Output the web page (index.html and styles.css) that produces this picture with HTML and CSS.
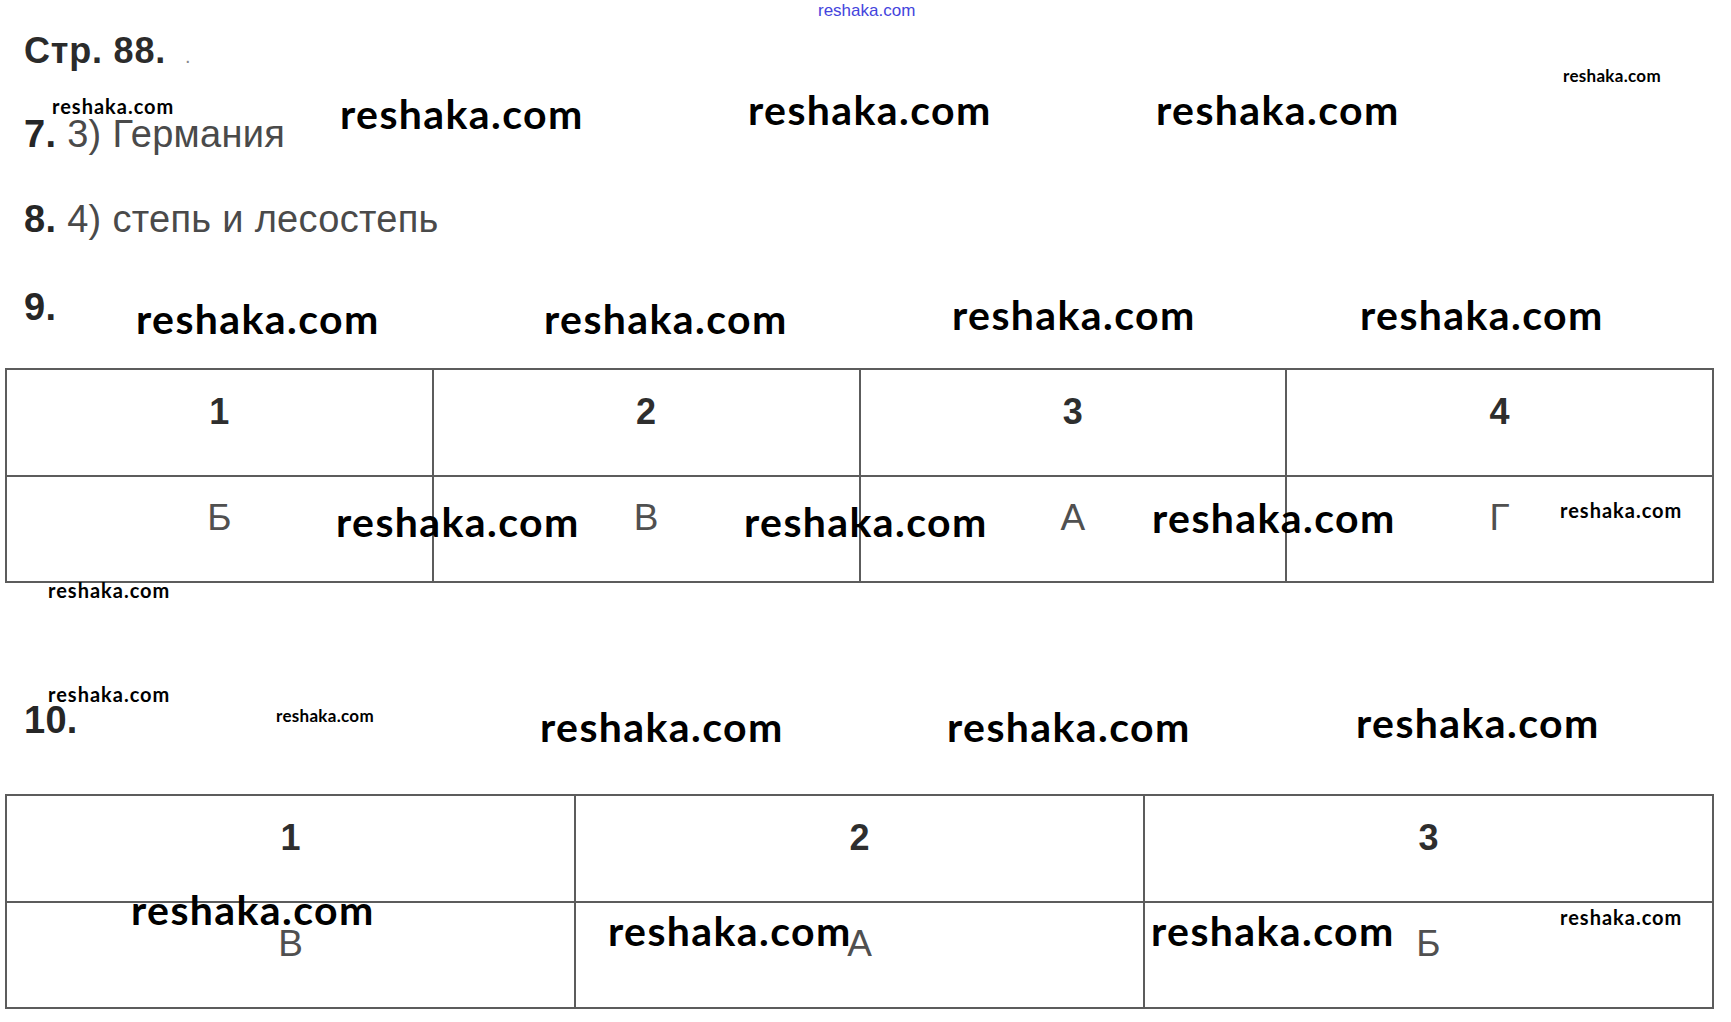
FILE: index.html
```html
<!DOCTYPE html>
<html lang="ru">
<head>
<meta charset="utf-8">
<title>Стр. 88</title>
<link rel="stylesheet" href="styles.css">
</head>
<body>
<div class="page">
  <div class="line title"><span class="strong">Стр. 88.</span> <span class="dot">.</span></div>
  <div class="line q7"><span class="num">7.</span> <span class="ans">3) Германия</span></div>
  <div class="line q8"><span class="num">8.</span> <span class="ans">4) степь и лесостепь</span></div>
  <div class="line q9"><span class="num">9.</span></div>

  <div class="grid grid4 t1">
    <div class="cell head">1</div>
    <div class="cell head">2</div>
    <div class="cell head">3</div>
    <div class="cell head">4</div>
    <div class="cell val">Б</div>
    <div class="cell val">В</div>
    <div class="cell val">А</div>
    <div class="cell val">Г</div>
  </div>

  <div class="line q10"><span class="num">10.</span></div>

  <div class="grid grid3 t2">
    <div class="cell head">1</div>
    <div class="cell head">2</div>
    <div class="cell head">3</div>
    <div class="cell val">В</div>
    <div class="cell val">А</div>
    <div class="cell val">Б</div>
  </div>

  <span class="wm-top">reshaka.com</span>

  <span class="wm lg w1">reshaka.com</span>
  <span class="wm lg w2">reshaka.com</span>
  <span class="wm lg w3">reshaka.com</span>
  <span class="wm xs w4">reshaka.com</span>
  <span class="wm sm w5">reshaka.com</span>
  <span class="wm lg w6">reshaka.com</span>
  <span class="wm lg w7">reshaka.com</span>
  <span class="wm lg w8">reshaka.com</span>
  <span class="wm lg w9">reshaka.com</span>
  <span class="wm lg w10">reshaka.com</span>
  <span class="wm lg w11">reshaka.com</span>
  <span class="wm lg w12">reshaka.com</span>
  <span class="wm sm w13">reshaka.com</span>
  <span class="wm sm w14">reshaka.com</span>
  <span class="wm sm w15">reshaka.com</span>
  <span class="wm xs w16">reshaka.com</span>
  <span class="wm lg w17">reshaka.com</span>
  <span class="wm lg w18">reshaka.com</span>
  <span class="wm lg w19">reshaka.com</span>
  <span class="wm lg w20">reshaka.com</span>
  <span class="wm lg w21">reshaka.com</span>
  <span class="wm lg w22">reshaka.com</span>
  <span class="wm sm w23">reshaka.com</span>
</div>
</body>
</html>
```

FILE: styles.css
```css
html, body {
  margin: 0;
  padding: 0;
  background: #ffffff;
}

.page {
  position: relative;
  width: 1731px;
  height: 1022px;
  overflow: hidden;
  padding-top: 33px;
  box-sizing: border-box;
  font-family: "Liberation Sans", Arial, sans-serif;
  color: #2a2a2a;
}

.line {
  margin-left: 24px;
  font-size: 38px;
  line-height: 38px;
  letter-spacing: 0.3px;
  white-space: nowrap;
}

.title {
  font-size: 36px;
  line-height: 36px;
  letter-spacing: 0.8px;
}

.strong {
  font-weight: 700;
  color: #2b2b2b;
}

.dot {
  font-size: 20px;
  line-height: 0;
  color: #8a8a8a;
  margin-left: 8px;
}

.num {
  font-weight: 700;
  color: #262626;
}

.ans {
  color: #4a4a4a;
}

.q7 { margin-top: 46px; }
.q8 { margin-top: 47px; }
.q9 { margin-top: 50px; }
.q10 { margin-top: 118px; }

.grid {
  display: grid;
  margin-left: 5px;
  width: 1709px;
  height: 215px;
  box-sizing: border-box;
  padding: 2px;
  gap: 2px;
  background: #5c5c5c;
  grid-template-rows: 1fr 1fr;
}

.grid4 { grid-template-columns: repeat(4, 1fr); }
.grid3 { grid-template-columns: repeat(3, 1fr); }

.t1 { margin-top: 42px; }
.t2 { margin-top: 55px; }

.cell {
  background: #ffffff;
  text-align: center;
  font-size: 36px;
  line-height: 36px;
}

.head {
  padding-top: 24px;
  font-weight: 700;
  color: #2e2e2e;
}

.val {
  padding-top: 22px;
  font-size: 37px;
  line-height: 37px;
  color: #505050;
}

.wm-top {
  position: absolute;
  left: 818px;
  top: 2px;
  font-family: "Liberation Sans", Arial, sans-serif;
  font-size: 17px;
  line-height: 17px;
  color: #4444dd;
  letter-spacing: 0;
}

.wm {
  position: absolute;
  font-family: Lato, "Open Sans", sans-serif;
  font-weight: 700;
  color: #000000;
  white-space: nowrap;
  line-height: 1;
}

.lg {
  font-size: 41px;
  letter-spacing: 1.4px;
}

.sm {
  font-size: 20px;
  letter-spacing: 1px;
}

.xs {
  font-size: 17px;
  letter-spacing: 0.3px;
}

.w1 { left: 340px; top: 93px; }
.w2 { left: 748px; top: 89px; }
.w3 { left: 1156px; top: 89px; }
.w4 { left: 1563px; top: 67px; }
.w5 { left: 52px; top: 96px; }
.w6 { left: 136px; top: 298px; }
.w7 { left: 544px; top: 298px; }
.w8 { left: 952px; top: 294px; }
.w9 { left: 1360px; top: 294px; }
.w10 { left: 336px; top: 501px; }
.w11 { left: 744px; top: 501px; }
.w12 { left: 1152px; top: 497px; }
.w13 { left: 1560px; top: 500px; }
.w14 { left: 48px; top: 580px; }
.w15 { left: 48px; top: 684px; }
.w16 { left: 276px; top: 707px; }
.w17 { left: 540px; top: 706px; }
.w18 { left: 947px; top: 706px; }
.w19 { left: 1356px; top: 702px; }
.w20 { left: 131px; top: 889px; }
.w21 { left: 608px; top: 910px; }
.w22 { left: 1151px; top: 910px; }
.w23 { left: 1560px; top: 907px; }
```
